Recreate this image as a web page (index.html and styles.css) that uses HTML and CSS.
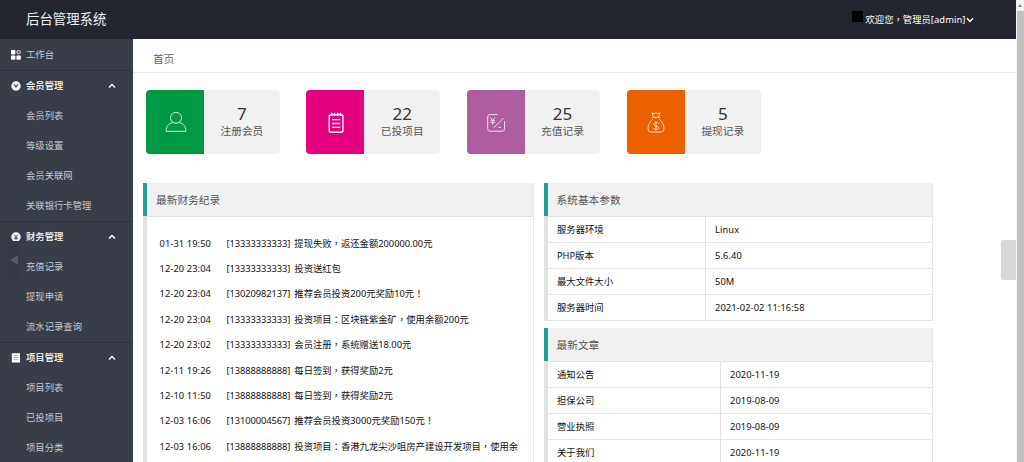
FILE: index.html
```html
<!DOCTYPE html>
<html lang="zh-CN">
<head>
<meta charset="utf-8">
<title>后台管理系统</title>
<link rel="stylesheet" href="styles.css">
</head>
<body>
<div class="app">
  <div class="shell">
    <header class="topbar">
      <div class="brand">后台管理系统</div>
      <div class="user"><span class="avatar"></span><span>欢迎您<span class="mark" lang="zh-TW">，</span>管理员<span class="latin">[admin]</span></span><svg class="chev" viewBox="0 0 8 6"><path d="M1 1.2 4 4.4 7 1.2"/></svg></div>
    </header>
    <div class="body">
      <nav class="sidebar">
        <div class="group">
          <div class="item head plain"><svg class="ico" viewBox="0 0 10 10"><rect x="0" y="0" width="4.4" height="4.4" rx=".8"/><rect x="0" y="5.4" width="4.4" height="4.4" rx=".8"/><rect x="5.4" y="5.4" width="4.4" height="4.4" rx=".8"/><circle class="line" cx="7.6" cy="2.2" r="1.7"/></svg><span>工作台</span></div>
        </div>
        <div class="group">
          <div class="item head"><svg class="ico" viewBox="0 0 10 10"><circle cx="5" cy="5" r="4.7"/><path class="cut" d="M3 3.2 5 6.4 7 3.2M5 3.6V5"/></svg><span>会员管理</span><svg class="chev" viewBox="0 0 8 6"><path d="M1 4.6 4 1.4 7 4.6"/></svg></div>
          <div class="item">会员列表</div>
          <div class="item">等级设置</div>
          <div class="item">会员关联网</div>
          <div class="item">关联银行卡管理</div>
        </div>
        <div class="group">
          <div class="item head"><svg class="ico" viewBox="0 0 10 10"><circle cx="5" cy="5" r="4.7"/><path class="cut thin" d="M3.2 2.4 5 5 6.8 2.4M5 5V8M3.2 5.1H6.8M3.2 6.5H6.8"/></svg><span>财务管理</span><svg class="chev" viewBox="0 0 8 6"><path d="M1 4.6 4 1.4 7 4.6"/></svg></div>
          <div class="item">充值记录</div>
          <div class="item">提现申请</div>
          <div class="item">流水记录查询</div>
        </div>
        <div class="group">
          <div class="item head"><svg class="ico" viewBox="0 0 10 10"><rect x="0.8" y="0.3" width="8.2" height="9.2" rx=".5"/><path class="cut faint" d="M2.8 2.5H7M2.8 4.4H7M2.8 6.3H7"/></svg><span>项目管理</span><svg class="chev" viewBox="0 0 8 6"><path d="M1 4.6 4 1.4 7 4.6"/></svg></div>
          <div class="item">项目列表</div>
          <div class="item">已投项目</div>
          <div class="item">项目分类</div>
        </div>
        <div class="collapse"><svg viewBox="0 0 8 10"><path d="M8 0V10L0 5Z"/></svg></div>
      </nav>
      <main class="main">
        <div class="crumb">首页</div>
        <div class="cards">
          <div class="card"><div class="tile green"><svg viewBox="0 0 24 24"><circle cx="12" cy="7.8" r="5.5"/><path d="M8.6 12.4C4.6 13.6 2.2 16.2 2 21.3H22C21.8 16.2 19.400 13.600 15.400 12.400"/></svg></div><div class="stat"><b>7</b><span>注册会员</span></div></div>
          <div class="card"><div class="tile pink"><svg class="bold" viewBox="0 0 24 24"><rect x="5.200" y="4.800" width="13.800" height="17.400" rx="2"/><path d="M7.700 2.800V6M10.600 2.800V6M13.600 2.800V6M16.500 2.800V6M8 9.600H16.200M8 13.500H16.200M8 17.400H16.200"/></svg></div><div class="stat"><b>22</b><span>已投项目</span></div></div>
          <div class="card"><div class="tile purple"><svg viewBox="0 0 24 24"><path d="M13.500 4.500H6Q3.700 4.500 3.700 6.800V18.800Q3.700 21.200 6 21.200H18Q20.500 21.200 20.500 18.800V11M19.500 8 9.500 18M6.300 7.500 8.700 10.500 11 7.500M8.700 10.500V14.500M6.500 10.700H11M6.500 12.600H11M14.500 17.500H17"/></svg></div><div class="stat"><b>25</b><span>充值记录</span></div></div>
          <div class="card"><div class="tile orange"><svg viewBox="0 0 24 24"><path d="M9.500 7.500 8.200 2.800 10.500 3.800 12 2.600 13.500 3.800 15.800 2.800 14.500 7.500M8.500 7.500H15.500M9 9C5.500 12 4 15 4 19Q4 22 7 22H17Q20 22 20 19C20 15 18.500 12 15 9"/><path d="M14.500 13.500C14 12 9.700 12 9.700 14.200C9.700 16.500 14.700 15.300 14.700 17.700C14.700 20 10 19.900 9.400 18M12 11.500V20.500"/></svg></div><div class="stat"><b>5</b><span>提现记录</span></div></div>
        </div>
        <div class="panels">
          <section class="panel finance">
            <h2>最新财务纪录</h2>
            <div class="log">
              <div class="row"><time>01-31 19:50</time><span class="phone">[13333333333]</span><span>提现失败<span class="mark" lang="zh-TW">，</span>返还金额<i>200000.00</i>元</span></div>
              <div class="row"><time>12-20 23:04</time><span class="phone">[13333333333]</span><span>投资送红包</span></div>
              <div class="row"><time>12-20 23:04</time><span class="phone">[13020982137]</span><span>推荐会员投资<i>200</i>元奖励<i>10</i>元<span class="mark" lang="zh-TW">！</span></span></div>
              <div class="row"><time>12-20 23:04</time><span class="phone">[13333333333]</span><span>投资项目<span class="mark" lang="zh-TW">：</span>区块链紫金矿<span class="mark" lang="zh-TW">，</span>使用余额<i>200</i>元</span></div>
              <div class="row"><time>12-20 23:02</time><span class="phone">[13333333333]</span><span>会员注册<span class="mark" lang="zh-TW">，</span>系统赠送<i>18.00</i>元</span></div>
              <div class="row"><time>12-11 19:26</time><span class="phone">[13888888888]</span><span>每日签到<span class="mark" lang="zh-TW">，</span>获得奖励<i>2</i>元</span></div>
              <div class="row"><time>12-10 11:50</time><span class="phone">[13888888888]</span><span>每日签到<span class="mark" lang="zh-TW">，</span>获得奖励<i>2</i>元</span></div>
              <div class="row"><time>12-03 16:06</time><span class="phone">[13100004567]</span><span>推荐会员投资<i>3000</i>元奖励<i>150</i>元<span class="mark" lang="zh-TW">！</span></span></div>
              <div class="row"><time>12-03 16:06</time><span class="phone">[13888888888]</span><span>投资项目<span class="mark" lang="zh-TW">：</span>香港九龙尖沙咀房产建设开发项目<span class="mark" lang="zh-TW">，</span>使用余</span></div>
            </div>
          </section>
          <div class="side">
            <section class="panel">
              <h2>系统基本参数</h2>
              <div class="grid params">
                <div>服务器环境</div><div class="num">Linux</div>
                <div><i>PHP</i>版本</div><div class="num">5.6.40</div>
                <div>最大文件大小</div><div class="num">50M</div>
                <div>服务器时间</div><div class="num">2021-02-02 11:16:58</div>
              </div>
            </section>
            <section class="panel">
              <h2>最新文章</h2>
              <div class="grid articles">
                <div>通知公告</div><div class="num">2020-11-19</div>
                <div>担保公司</div><div class="num">2019-08-09</div>
                <div>营业执照</div><div class="num">2019-08-09</div>
                <div>关于我们</div><div class="num">2020-11-19</div>
              </div>
            </section>
          </div>
        </div>
      </main>
    </div>
  </div>
  <div class="scroll"><div class="arrow"></div></div>
  <div class="handle"></div>
</div>
</body>
</html>
```
FILE: styles.css
```css
* { box-sizing: border-box; }
body { margin: 0; font: 9.33px/1.4 "Noto Sans", "Noto Sans CJK SC", sans-serif; color: #111; background: #fff; }
i { font-style: normal; letter-spacing: -0.03px; }
.mark { font-family: "Noto Sans CJK TC", sans-serif; line-height: 1; }
time, .num { letter-spacing: 0.08px; }
.phone { letter-spacing: -0.08px; }
.app { position: relative; display: flex; width: 1024px; height: 462px; overflow: hidden; }
.shell { flex: 1; min-width: 0; display: flex; flex-direction: column; }
.topbar { height: 39px; flex: none; background: #23262e; color: #fff; display: flex; align-items: center; justify-content: space-between; padding: 0 42px 0 26px; }
.brand { font-size: 13.4px; color: #eee; }
.user { display: flex; align-items: center; white-space: nowrap; padding-top: 1px; }
.latin { letter-spacing: 0.1px; }
.avatar { width: 11px; height: 11px; background: #000; margin: -6px 3px 0 0; }
.chev { width: 8px; height: 6px; fill: none; stroke: #fff; stroke-width: 1.4; }
.body { flex: 1; min-height: 0; display: flex; }
.sidebar { position: relative; width: 133px; flex: none; background: #383d48; color: #c8cace; overflow: hidden; padding-top: 1px; }
.group { border-bottom: 1px solid #2f343e; }
.item { height: 30px; display: flex; align-items: center; padding-left: 26px; }
.group .head { padding: 0 17px 0 11px; color: #fff; font-weight: 500; }
.group .plain { color: #c8cace; font-weight: 400; }
.head .chev { margin-left: auto; }
.ico { width: 10px; height: 10px; margin-right: 5px; fill: #fff; }
.ico .line { fill: none; stroke: #fff; stroke-width: .9; }
.ico .cut { fill: none; stroke: #393d49; stroke-width: 1; }
.ico .thin { stroke-width: .8; }
.ico .faint { stroke: #999; stroke-width: .8; }
.collapse { position: absolute; left: 7px; top: 202px; width: 13px; height: 38px; background: #353944; display: flex; align-items: center; justify-content: center; }
.collapse svg { width: 8px; height: 10px; fill: #555962; }
.main { flex: 1; min-width: 0; }
.crumb { height: 34px; border-bottom: 1px solid #ececec; padding: 6px 0 0 20px; font-size: 10.7px; line-height: 29px; color: #666; }
.cards { display: flex; gap: 26.5px; padding: 17px 0 0 13px; }
.card { width: 133.8px; height: 63.500px; display: flex; background: #f1f1f1; border-radius: 4px; overflow: hidden; }
.tile { width: 58px; display: flex; align-items: center; justify-content: center; padding: 1px 0 0 1px; }
.tile svg { width: 24px; height: 24px; fill: none; stroke: #fff; stroke-width: 1; opacity: .8; }
.tile .bold { stroke-width: 1.4; opacity: 1; }
.green { background: #009a44; }
.pink { background: #e4007f; }
.purple { background: #ae5da1; }
.orange { background: #eb6100; }
.stat { flex: 1; display: flex; flex-direction: column; align-items: center; justify-content: center; font-size: 10.7px; color: #555; }
.stat b { font-weight: 400; font-size: 17px; line-height: 19px; color: #333; }
.stat span { line-height: 16px; }
.panels { display: flex; gap: 10px; padding: 29.500px 0 0 10px; align-items: flex-start; }
.panel { border: solid #e8e8e8; border-width: 0 1px 0 4px; border-left-color: #e2e2e2; }
.panel h2 { margin: 0 0 0 -4px; height: 33px; border-left: 4px solid #20a08f; background: #f1f1f1; font-size: 10.7px; line-height: 34px; font-weight: 400; color: #555; padding-left: 9px; }
.finance { width: 391px; height: 300px; }
.log { border-top: 1px solid #e4e4e4; padding: 13.500px 0 0 12.500px; }
.row { height: 25.4px; display: flex; align-items: center; white-space: nowrap; }
.row time { width: 67px; }
.phone { width: 67.800px; }
.side { width: 389.500px; margin-left: -0.5px; display: flex; flex-direction: column; gap: 7px; }
.grid { display: grid; grid-auto-rows: 26px; border-top: 1px solid #e4e4e4; }
.params { grid-template-columns: 157px 1fr; }
.articles { grid-template-columns: 172px 1fr; }
.grid > div { border-bottom: 1px solid #e6e6e6; padding-left: 9.500px; line-height: 26px; }
.grid > .num { border-left: 1px solid #e4e4e4; }
.scroll { width: 8.500px; flex: none; background: #c1c1c1; border-left: 1px solid #f1f1f1; }
.arrow { height: 11px; background: #f1f1f1; display: flex; justify-content: center; padding-top: 2px; }
.arrow::before { content: ""; width: 0; height: 0; border: 2px solid transparent; border-bottom: 3px solid #888; }
.handle { position: absolute; left: 1001px; top: 240px; width: 15px; height: 40px; border-radius: 3px 0 0 3px; background: #d8d8d8; }
```
